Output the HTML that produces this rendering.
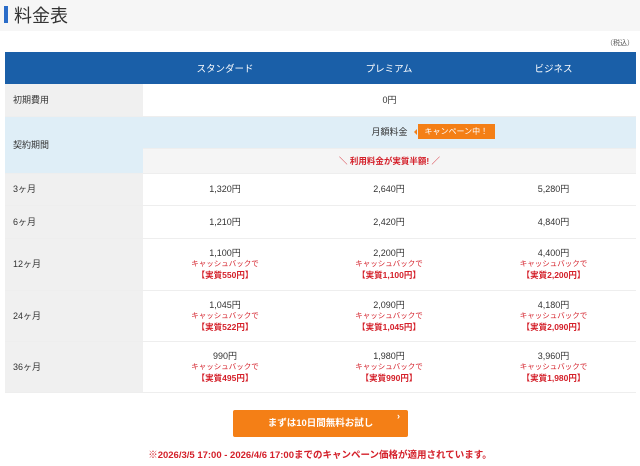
<!DOCTYPE html><html><head><meta charset="utf-8"><style>
*{margin:0;padding:0;box-sizing:border-box}
body{width:640px;height:466px;background:#fff;font-family:"Liberation Sans","Noto Sans CJK JP",sans-serif;color:#333;position:relative;overflow:hidden}
.tb{position:absolute;left:0;top:0;width:640px;height:31px;background:#f6f6f6}
.tb .bar{position:absolute;left:4px;top:6px;width:4px;height:17px;background:#2a6cc8}
.tb .t{position:absolute;left:14px;top:2px;font-size:18px;color:#333}
.tax{position:absolute;right:6px;top:38px;font-size:7px;color:#555}
table{position:absolute;left:5px;top:52px;width:631px;border-collapse:collapse;font-size:9px}
td{text-align:center;border-bottom:1px solid #eee;vertical-align:middle;line-height:12px}
td.l{background:#f0f0f0;text-align:left;padding-left:8px;width:138px}
th{background:#1a5fa8;color:#fff;font-weight:normal;font-size:9.5px;height:32px}
.r{color:#d4202a;font-size:7.5px;line-height:10px}
.rb{color:#d4202a;font-size:8.5px;font-weight:bold;line-height:12px}
.mw{position:relative;display:inline-block}
.badge{position:absolute;left:100%;top:-2px;white-space:nowrap;background:#f47f16;color:#fff;font-size:8px;padding:2px 7px;margin-left:10px;line-height:11px}
.badge:before{content:"";position:absolute;left:-4px;top:5px;border:3px solid transparent;border-right-color:#f47f16;border-left:0}
.btn{position:absolute;left:233px;top:410px;width:175px;height:27px;background:#f47f16;color:#fff;font-size:9.5px;font-weight:bold;text-align:center;line-height:27px;border-radius:2px}
.btn span{position:absolute;right:8px;top:-7px;font-size:9px}
.ft{position:absolute;left:0;width:640px;top:447px;text-align:center;color:#d4202a;font-size:9.5px;font-weight:bold}
</style></head><body>
<div class="tb"><div class="bar"></div><div class="t">料金表</div></div>
<div class="tax">（税込）</div>
<table>
<tr><th style="width:138px"></th><th style="width:164px">スタンダード</th><th style="width:164px">プレミアム</th><th>ビジネス</th></tr>
<tr style="height:32px"><td class="l">初期費用</td><td colspan="3">0円</td></tr>
<tr style="height:32px"><td class="l" rowspan="2" style="background:#dfeef7">契約期間</td><td colspan="3" style="background:#dfeef7"><span class="mw">月額料金<span class="badge">キャンペーン中！</span></span></td></tr>
<tr style="height:25px"><td colspan="3" style="background:#f5f5f5"><span class="rb">＼ 利用料金が実質半額! ／</span></td></tr>
<tr style="height:32px"><td class="l">3ヶ月</td><td>1,320円</td><td>2,640円</td><td>5,280円</td></tr>
<tr style="height:33px"><td class="l">6ヶ月</td><td>1,210円</td><td>2,420円</td><td>4,840円</td></tr>
<tr style="height:52px"><td class="l">12ヶ月</td><td>1,100円<div class="r">キャッシュバックで</div><div class="rb">【実質550円】</div></td><td>2,200円<div class="r">キャッシュバックで</div><div class="rb">【実質1,100円】</div></td><td>4,400円<div class="r">キャッシュバックで</div><div class="rb">【実質2,200円】</div></td></tr>
<tr style="height:51px"><td class="l">24ヶ月</td><td>1,045円<div class="r">キャッシュバックで</div><div class="rb">【実質522円】</div></td><td>2,090円<div class="r">キャッシュバックで</div><div class="rb">【実質1,045円】</div></td><td>4,180円<div class="r">キャッシュバックで</div><div class="rb">【実質2,090円】</div></td></tr>
<tr style="height:51px"><td class="l">36ヶ月</td><td>990円<div class="r">キャッシュバックで</div><div class="rb">【実質495円】</div></td><td>1,980円<div class="r">キャッシュバックで</div><div class="rb">【実質990円】</div></td><td>3,960円<div class="r">キャッシュバックで</div><div class="rb">【実質1,980円】</div></td></tr>
</table>
<div class="btn">まずは10日間無料お試し<span>›</span></div>
<div class="ft">※2026/3/5 17:00 - 2026/4/6 17:00までのキャンペーン価格が適用されています。</div>
</body></html>
